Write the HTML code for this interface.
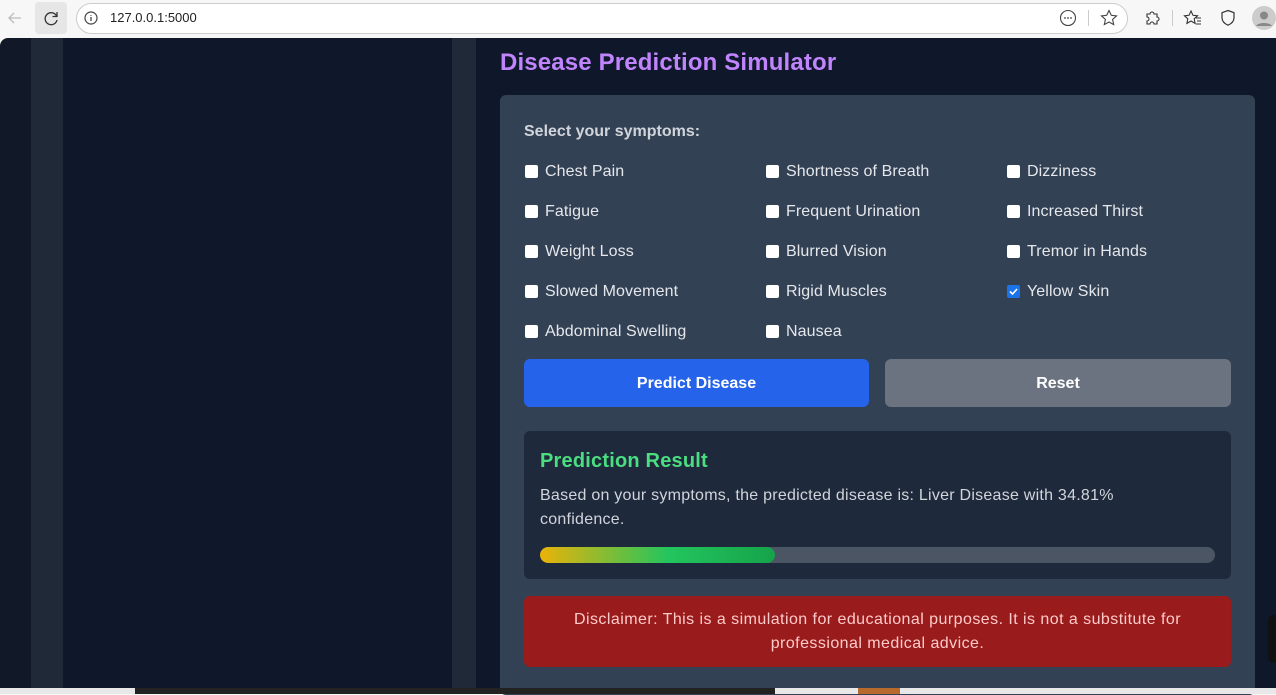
<!DOCTYPE html>
<html><head><meta charset="utf-8"><style>
*{margin:0;padding:0;box-sizing:border-box}
body{width:1276px;height:694px;overflow:hidden;background:#f7f7f7;font-family:"Liberation Sans",sans-serif;position:relative}
.a{position:absolute}
.cb{position:absolute;width:13px;height:13px;background:#fff;border-radius:2px}
.lb{position:absolute;font-size:16px;color:#e5e7eb;line-height:20px;letter-spacing:.1px}
</style></head><body>
<div class="a" style="left:0;top:0;width:1276px;height:38px;background:#f7f7f7"></div>
<svg class="a" style="left:5px;top:8px" width="20" height="20" viewBox="0 0 20 20"><path d="M16 10H4M9 5l-5 5 5 5" stroke="#bbb" stroke-width="1.3" fill="none"/></svg>
<div class="a" style="left:35px;top:2px;width:32px;height:32px;background:#e6e6e6;border-radius:4px"></div>
<svg class="a" style="left:41px;top:8px" width="20" height="20" viewBox="0 0 20 20"><path d="M15.5 8A6 6 0 1 0 16 12" stroke="#333" stroke-width="1.3" fill="none"/><path d="M16 4v4.5h-4.5" stroke="#333" stroke-width="1.3" fill="none"/></svg>
<div class="a" style="left:76px;top:3px;width:1052px;height:31px;border:1px solid #ccc;border-radius:16px;background:#fff"></div>
<svg class="a" style="left:83px;top:10px" width="16" height="16" viewBox="0 0 16 16"><circle cx="8" cy="8" r="6" stroke="#444" fill="none" stroke-width="1.2"/><path d="M8 7v4M8 5v.8" stroke="#444" stroke-width="1.3"/></svg>
<div class="a" style="left:110px;top:10px;font-size:13px;color:#222">127.0.0.1:5000</div>
<svg class="a" style="left:1058px;top:8px" width="20" height="20" viewBox="0 0 20 20"><circle cx="10" cy="10" r="7.5" stroke="#444" fill="none" stroke-width="1.1"/><circle cx="7" cy="10" r=".9" fill="#444"/><circle cx="10" cy="10" r=".9" fill="#444"/><circle cx="13" cy="10" r=".9" fill="#444"/></svg>
<div class="a" style="left:1088px;top:10px;width:1px;height:16px;background:#ccc"></div>
<svg class="a" style="left:1099px;top:8px" width="20" height="20" viewBox="0 0 20 20"><path d="M10 2.5l2.3 4.8 5.2.6-3.9 3.6 1.1 5.1L10 14l-4.7 2.6 1.1-5.1L2.5 7.9l5.2-.6z" stroke="#444" fill="none" stroke-width="1.1"/></svg>
<svg class="a" style="left:1143px;top:8px" width="20" height="20" viewBox="0 0 20 20"><path d="M4 6h3a2 2 0 1 1 4 0h3v3a2 2 0 1 1 0 4v3h-3a2 2 0 1 0-4 0H4v-3a2 2 0 1 0 0-4z" stroke="#333" fill="none" stroke-width="1.1"/></svg>
<div class="a" style="left:1172px;top:10px;width:1px;height:16px;background:#ccc"></div>
<svg class="a" style="left:1183px;top:8px" width="20" height="20" viewBox="0 0 20 20"><path d="M8 3l2 4.3 4.5.5-3.3 3 .9 4.6L8 13l-4.1 2.4.9-4.6-3.3-3 4.5-.5z" stroke="#333" fill="none" stroke-width="1.1"/><path d="M13 10h5M14 13h4M13 16h5" stroke="#333" stroke-width="1.1"/></svg>
<svg class="a" style="left:1218px;top:8px" width="20" height="20" viewBox="0 0 20 20"><path d="M10 2.5l6 2.2v5c0 3.5-2.7 6-6 7.5-3.3-1.5-6-4-6-7.5v-5z" stroke="#333" fill="none" stroke-width="1.2"/></svg>
<svg class="a" style="left:1252px;top:6px" width="24" height="24" viewBox="0 0 24 24"><circle cx="12" cy="12" r="12" fill="#ccc"/><circle cx="12" cy="9.5" r="4" fill="#888"/><path d="M4 20c2-4 14-4 16 0" fill="#888"/></svg>
<div class="a" style="left:0;top:38px;width:1276px;height:650px;background:#111827;border-top-left-radius:8px;overflow:hidden">
 <div class="a" style="left:31px;top:0;width:32px;height:650px;background:#1f2937"></div>
 <div class="a" style="left:63px;top:0;width:389px;height:650px;background:#0f172a"></div>
 <div class="a" style="left:452px;top:0;width:24px;height:650px;background:#1f2937"></div>
 <div class="a" style="left:476px;top:0;width:800px;height:650px;background:#0f172a"></div>
</div>
<div class="a" style="left:500px;top:49px;font-size:24px;font-weight:bold;color:#c084fc;letter-spacing:.15px">Disease Prediction Simulator</div>
<div class="a" style="left:500px;top:95px;width:755px;height:600px;background:#334155;border-radius:6px"></div>
<div class="a" style="left:524px;top:123px;font-size:16px;font-weight:bold;color:#d1d5db">Select your symptoms:</div>

<div class="cb" style="left:525px;top:165px"></div><div class="lb" style="left:545px;top:162px">Chest Pain</div>
<div class="cb" style="left:766px;top:165px"></div><div class="lb" style="left:786px;top:162px">Shortness of Breath</div>
<div class="cb" style="left:1007px;top:165px"></div><div class="lb" style="left:1027px;top:162px">Dizziness</div>
<div class="cb" style="left:525px;top:205px"></div><div class="lb" style="left:545px;top:202px">Fatigue</div>
<div class="cb" style="left:766px;top:205px"></div><div class="lb" style="left:786px;top:202px">Frequent Urination</div>
<div class="cb" style="left:1007px;top:205px"></div><div class="lb" style="left:1027px;top:202px">Increased Thirst</div>
<div class="cb" style="left:525px;top:245px"></div><div class="lb" style="left:545px;top:242px">Weight Loss</div>
<div class="cb" style="left:766px;top:245px"></div><div class="lb" style="left:786px;top:242px">Blurred Vision</div>
<div class="cb" style="left:1007px;top:245px"></div><div class="lb" style="left:1027px;top:242px">Tremor in Hands</div>
<div class="cb" style="left:525px;top:285px"></div><div class="lb" style="left:545px;top:282px">Slowed Movement</div>
<div class="cb" style="left:766px;top:285px"></div><div class="lb" style="left:786px;top:282px">Rigid Muscles</div>
<div class="cb" style="left:1007px;top:285px;background:#1a73e8"><svg width="13" height="13" viewBox="0 0 13 13" style="display:block"><path d="M3 6.5l2.5 2.5 4.5-5" stroke="#fff" stroke-width="1.6" fill="none"/></svg></div><div class="lb" style="left:1027px;top:282px">Yellow Skin</div>
<div class="cb" style="left:525px;top:325px"></div><div class="lb" style="left:545px;top:322px">Abdominal Swelling</div>
<div class="cb" style="left:766px;top:325px"></div><div class="lb" style="left:786px;top:322px">Nausea</div>

<div class="a" style="left:524px;top:359px;width:345px;height:48px;background:#2563eb;border-radius:6px;color:#fff;font-weight:bold;font-size:16px;text-align:center;line-height:49px">Predict Disease</div>
<div class="a" style="left:885px;top:359px;width:346px;height:48px;background:#6b7280;border-radius:6px;color:#fff;font-weight:bold;font-size:16px;text-align:center;line-height:49px">Reset</div>

<div class="a" style="left:524px;top:431px;width:707px;height:148px;background:#1e293b;border-radius:6px"></div>
<div class="a" style="left:540px;top:450px;font-size:20px;font-weight:bold;color:#4ade80;letter-spacing:.2px">Prediction Result</div>
<div class="a" style="left:540px;top:484px;width:680px;font-size:16px;line-height:24px;color:#d1d5db;letter-spacing:.25px">Based on your symptoms, the predicted disease is: Liver Disease with 34.81%<br>confidence.</div>
<div class="a" style="left:540px;top:547px;width:675px;height:16px;background:#4b5563;border-radius:8px;overflow:hidden"><div style="width:235px;height:16px;border-radius:8px;background:linear-gradient(90deg,#eab308,#22c55e 55%,#16a34a)"></div></div>

<div class="a" style="left:524px;top:596px;width:707px;height:71px;background:#991b1b;border-radius:6px;color:#fecaca;font-size:16px;line-height:24px;text-align:center;padding-top:12px;letter-spacing:.45px">Disclaimer: This is a simulation for educational purposes. It is not a substitute for<br>professional medical advice.</div>
<div class="a" style="left:1268px;top:615px;width:10px;height:48px;background:#111;border-radius:6px 0 0 6px"></div>
<div class="a" style="left:0;top:688px;width:1276px;height:6px;background:#e8e8e8"></div>
<div class="a" style="left:135px;top:688px;width:640px;height:6px;background:#222"></div>
<div class="a" style="left:858px;top:688px;width:42px;height:6px;background:#b86a2c"></div>
</body></html>
